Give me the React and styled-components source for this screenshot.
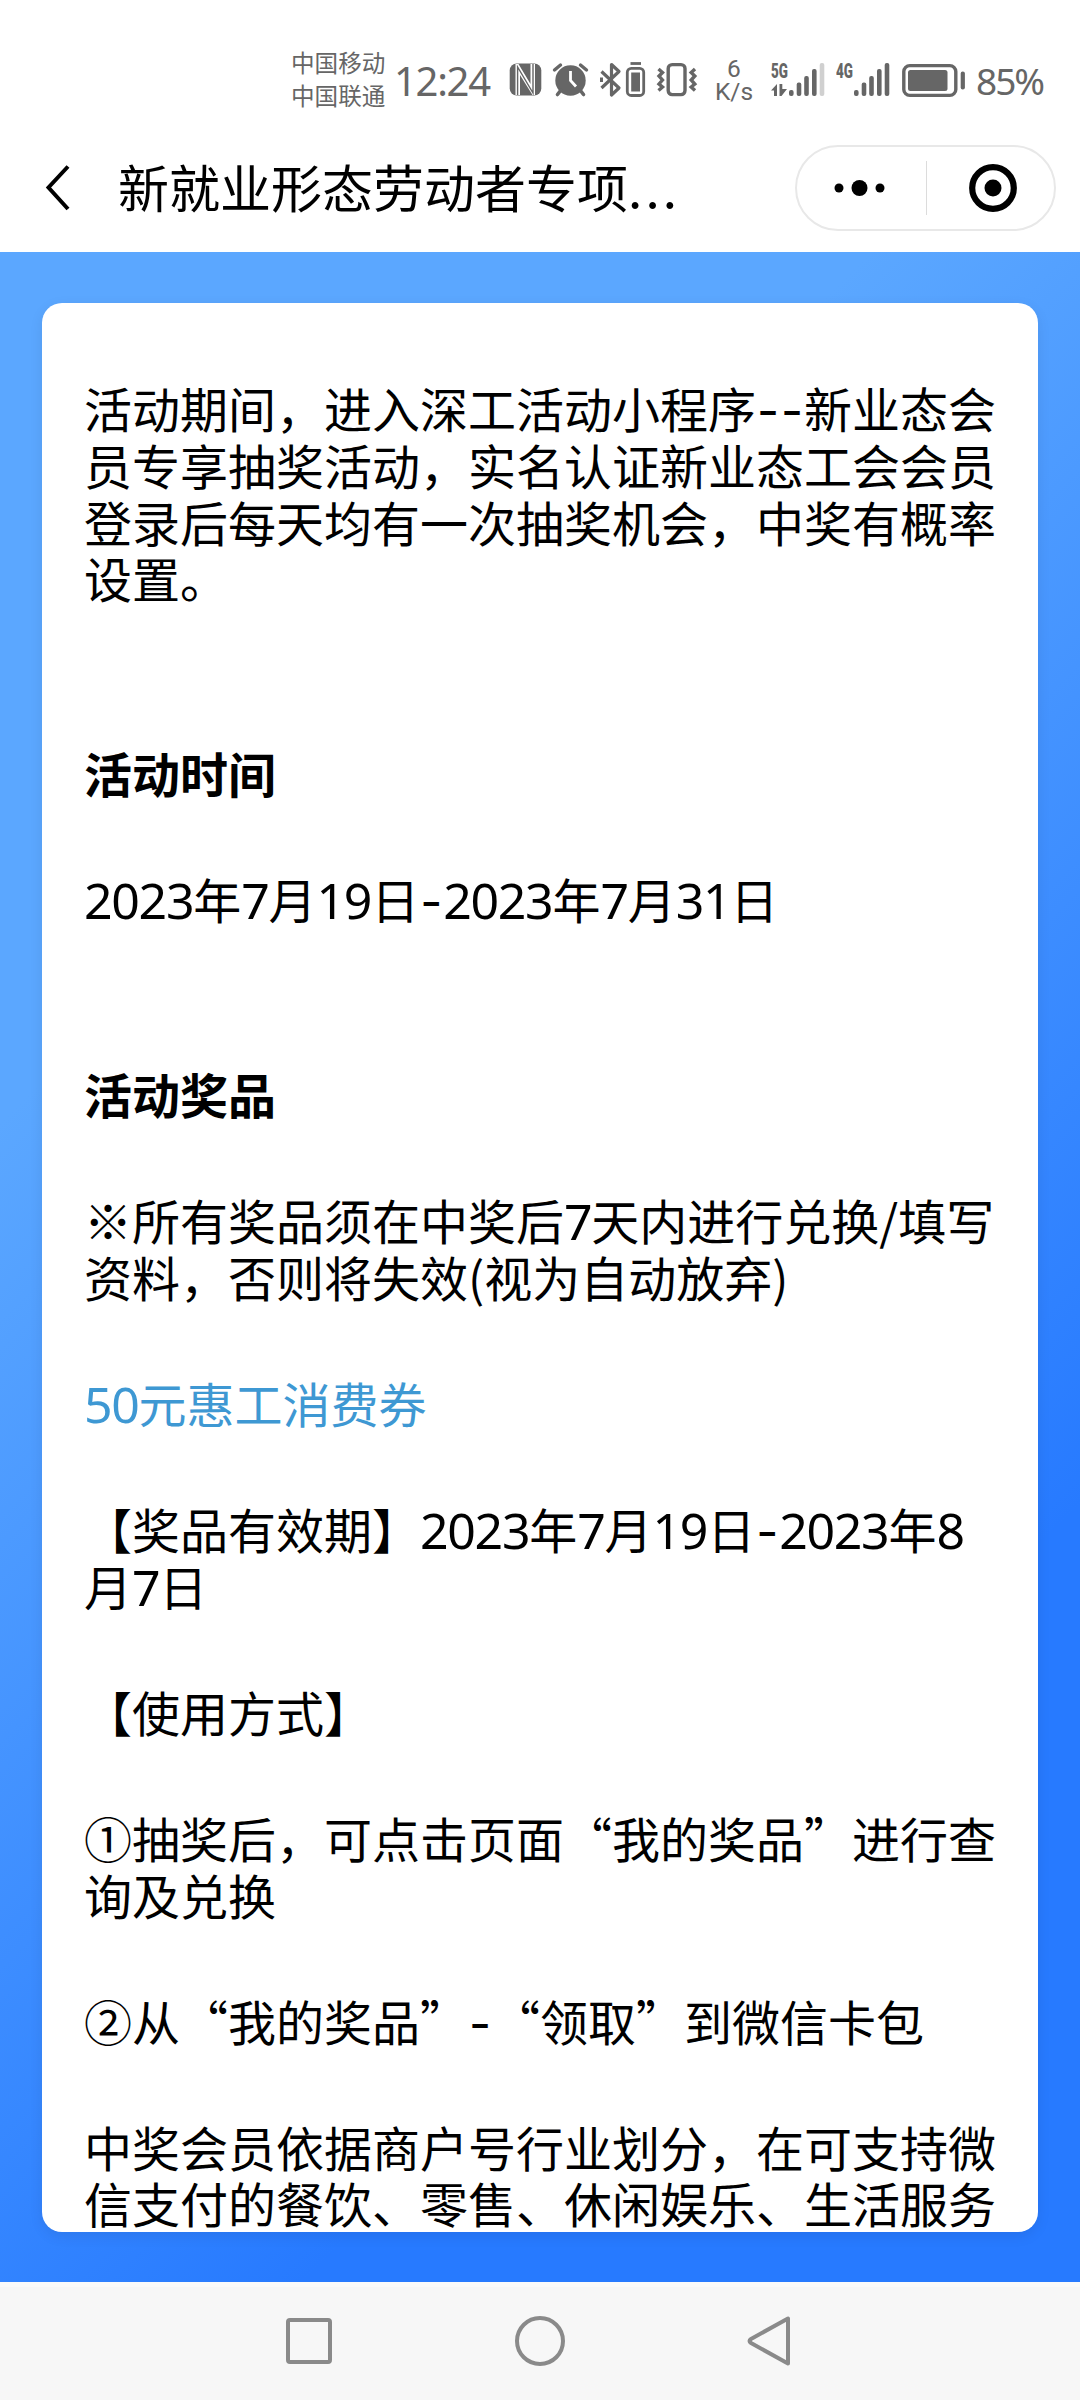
import React from "react";
import styled, { createGlobalStyle } from "styled-components";

const GlobalStyle = createGlobalStyle`
  * {
    box-sizing: border-box;
  }
  body {
    margin: 0;
    background: #fff;
    font-family: "Noto Sans CJK SC", sans-serif;
    text-spacing-trim: space-all;
  }
`

const Page = styled.div`
  display: flex;
  flex-direction: column;
  width: 1080px;
  height: 2400px;
  overflow: hidden;
`

const StatusBar = styled.div`
  display: flex;
  align-items: center;
  height: 124px;
  padding: 36px 0 0 291px;
  color: #666;
  font-family: Roboto, sans-serif;
`

const Carriers = styled.div`
  width: 103px;
  margin-bottom: 2px;
  font-family: "Noto Sans CJK SC", sans-serif;
  font-size: 23.6px;
  line-height: 33px;
  white-space: nowrap;
`

const Clock = styled.div`
  width: 115px;
  padding-top: 2px;
  font-family: "Noto Sans", sans-serif;
  font-size: 40px;
  line-height: 48px;
  letter-spacing: -1.3px;
`

const StatusIcons = styled.svg`
  display: block;
  width: 190px;
  height: 40px;
`

const Speed = styled.div`
  display: flex;
  flex-direction: column;
  align-items: center;
  width: 70px;
  font-size: 24.5px;
  line-height: 23px;
`

const Signal = styled.div`
  position: relative;
  width: ${(props) => props.$width}px;
  height: 40px;
`

const SignalLabel = styled.span`
  position: absolute;
  top: 2px;
  left: 0;
  font-size: 21px;
  font-weight: 900;
  line-height: 18px;
  transform: scaleX(0.64);
  transform-origin: left;
`

const SignalBars = styled.svg`
  display: block;
  width: 100%;
  height: 40px;
`

const BatteryIcon = styled.svg`
  display: block;
  width: 75px;
  height: 40px;
`

const BatteryText = styled.div`
  padding-top: 2px;
  font-family: "Noto Sans", sans-serif;
  font-size: 37px;
  line-height: 44px;
  letter-spacing: -2px;
`

const NavBar = styled.header`
  display: flex;
  align-items: center;
  height: 128px;
  padding: 0 24px 0 42px;
`

const BackIcon = styled.svg`
  width: 32px;
  height: 50px;
  margin-right: 44px;
`

const NavTitle = styled.h1`
  flex: 1;
  margin: 0 0 5px;
  color: #000;
  font-size: 51px;
  font-weight: 400;
  line-height: 72px;
  white-space: nowrap;
`

const Ellipsis = styled.span`
  letter-spacing: 3.2px;
`

const Capsule = styled.div`
  display: flex;
  align-items: center;
  width: 261px;
  height: 86px;
  border: 2px solid #e8e8e8;
  border-radius: 43px;
`

const CapsuleButton = styled.div`
  display: flex;
  align-items: center;
  justify-content: center;
  width: 50%;
  height: 54px;
  padding: 0 ${(props) => props.$right || 0}px 0 ${(props) => props.$left || 0}px;

  & + & {
    border-left: 1px solid #dcdcdc;
  }
`

const Content = styled.main`
  display: flex;
  height: 2030px;
  padding: 51px 42px 50px;
  background: linear-gradient(135deg, #5ba7ff 28%, #277aff 75%);
`

const Card = styled.article`
  flex: 1;
  display: flex;
  flex-direction: column;
  gap: 138.2px;
  padding: 76px 40px 0 42px;
  overflow: hidden;
  border-radius: 20px;
  background: #fff;
  box-shadow: 0 4px 14px rgba(0, 0, 0, 0.08);
`

const Section = styled.section`
  display: flex;
  flex-direction: column;
  gap: 69.2px;
`

const SectionTitle = styled.h2`
  margin: 0;
  font-size: 48px;
  font-weight: 700;
  line-height: 56.8px;
`

const Paragraph = styled.p`
  margin: 0;
  color: ${(props) => props.$color || "#000"};
  font-size: 48px;
  line-height: 56.8px;
`

const Digits = styled.span`
  font-family: "Noto Sans", sans-serif;
  font-size: 50px;
  line-height: 0;
  letter-spacing: -1.3px;
`

const Dash = styled.span`
  display: inline-block;
  width: 24px;
  font-family: Inter, sans-serif;
  line-height: 1;
  text-align: center;
`

const SystemNav = styled.nav`
  display: flex;
  align-items: center;
  justify-content: center;
  gap: 178px;
  height: 118px;
  background: #f7f7f7;
  box-shadow: inset 0 5px #fafafa;
`

const NavIcon = styled.svg`
  width: 52px;
  height: 52px;
  fill: none;
  stroke: #8a8a8a;
  stroke-width: 4;
`

const sections = [
  {
    paragraphs: [
      {
        text: "活动期间，进入深工活动小程序--新业态会员专享抽奖活动，实名认证新业态工会会员登录后每天均有一次抽奖机会，中奖有概率设置。",
      },
    ],
  },
  {
    title: "活动时间",
    paragraphs: [{ text: "2023年7月19日-2023年7月31日" }],
  },
  {
    title: "活动奖品",
    paragraphs: [
      { text: "※所有奖品须在中奖后7天内进行兑换/填写资料，否则将失效(视为自动放弃)" },
      { text: "50元惠工消费券", color: "#3e98d3" },
      { text: "【奖品有效期】2023年7月19日-2023年8月7日" },
      { text: "【使用方式】" },
      { text: "①抽奖后，可点击页面“我的奖品”进行查询及兑换" },
      { text: "②从“我的奖品”-“领取”到微信卡包" },
      { text: "中奖会员依据商户号行业划分，在可支持微信支付的餐饮、零售、休闲娱乐、生活服务" },
    ],
  },
];

// digits and hyphens use a latin face, everything else stays in the CJK one
const renderText = (text) =>
  text.split(/(\d+|-)/).map((part, index) => {
    if (part === "-") return <Dash key={index}>-</Dash>;
    if (/^\d+$/.test(part)) return <Digits key={index}>{part}</Digits>;
    return part;
  });

const bars = [
  { x: 0, y: 30 },
  { x: 7.7, y: 22.5 },
  { x: 15.2, y: 16 },
  { x: 23, y: 9 },
  { x: 30.7, y: 3 },
];

const SignalMeter = ({ label, width, left, level, arrows }) => (
  <Signal $width={width}>
    <SignalLabel>{label}</SignalLabel>
    <SignalBars viewBox={`0 0 ${width} 40`}>
      {arrows && (
        <path d="M0 30.5 L6 24 V36 H3 V30.5 Z M8.5 24 H11.3 V29 H16 L10.5 36 H8.5 Z" fill="#666" />
      )}
      {bars.map((bar, index) => (
        <rect
          key={bar.x}
          x={left + bar.x}
          y={bar.y}
          width="4.6"
          height={36 - bar.y}
          rx="2"
          fill={index < level ? "#666" : "#d0d0d0"}
        />
      ))}
    </SignalBars>
  </Signal>
);

const App = () => {
  return (
    <Page>
      <GlobalStyle />
      <StatusBar>
        <Carriers>
          <div>中国移动</div>
          <div>中国联通</div>
        </Carriers>
        <Clock>12:24</Clock>
        <StatusIcons viewBox="509 60 190 40" fill="none" stroke="#666">
          {/* nfc */}
          <rect x="509.7" y="63.5" width="31.6" height="32" rx="7" fill="#666" stroke="none" />
          <path
            d="M515.5 95 V64 H518.5 L530.5 84 V64 H535 V95 H532.5 L520 75 V95 Z"
            fill="#fff"
            stroke="none"
          />
          <path d="M517.6 95 V67 L533 93 V64" strokeWidth="1.4" />
          {/* alarm */}
          <circle cx="570.5" cy="80.5" r="15.2" fill="#666" stroke="none" />
          <path d="M554.5 70 L560.5 65 M586.5 70 L580.5 65" strokeWidth="3.4" strokeLinecap="round" />
          <path d="M561 90 L557.5 94.5 M580 90 L583.5 94.5" strokeWidth="3.6" strokeLinecap="round" />
          <path d="M570.5 71 V80.5 L576 86.5" stroke="#fff" strokeWidth="2.8" />
          {/* bluetooth with its battery */}
          <path d="M601.5 71.5 L619 88 L611.5 95 V64.5 L619 71.5 L601.5 88" strokeWidth="3.2" strokeLinejoin="round" />
          <path d="M601.5 77.5 V82" strokeWidth="3" />
          <rect x="627.3" y="68.3" width="16.4" height="27.2" rx="4" strokeWidth="2.8" />
          <rect x="631.2" y="72.5" width="8.8" height="19" fill="#666" stroke="none" />
          <path d="M630.5 63.5 H641" strokeWidth="2.8" />
          {/* vibrate */}
          <rect x="668.2" y="64.6" width="16.8" height="30" rx="4" strokeWidth="3.4" />
          <path d="M658.5 69 L662.5 72.5 L659 76 L662.5 80 L659 84 L662.5 87 L658.5 90.5" strokeWidth="3.4" />
          <path d="M695 69 L691.2 72.5 L694.8 76 L691.2 80 L694.8 84 L691.2 87 L695 90.5" strokeWidth="3.4" />
        </StatusIcons>
        <Speed>
          <span>6</span>
          <span>K/s</span>
        </Speed>
        <Signal $width={2} />
        <SignalMeter label="5G" width={65} left={18} level={4} arrows />
        <SignalMeter label="4G" width={65} left={18} level={5} />
        <BatteryIcon viewBox="901 60 75 40" fill="none" stroke="#666">
          <rect x="903.8" y="65.6" width="52" height="29.8" rx="6" strokeWidth="3.4" />
          <rect x="908" y="70" width="39.5" height="21" rx="2.5" fill="#666" stroke="none" />
          <rect x="960.7" y="71.5" width="4.2" height="18" rx="2" fill="#666" stroke="none" />
        </BatteryIcon>
        <BatteryText>85%</BatteryText>
      </StatusBar>
      <NavBar>
        <BackIcon viewBox="0 0 32 50" fill="none" stroke="#000" strokeWidth="4">
          <path d="M26 3.5 L6.5 24.5 L26 46" />
        </BackIcon>
        <NavTitle>
          新就业形态劳动者专项<Ellipsis>...</Ellipsis>
        </NavTitle>
        <Capsule>
          <CapsuleButton $right={2}>
            <svg width="52" height="18" viewBox="0 0 52 18">
              <circle cx="5" cy="9" r="4.5" />
              <circle cx="25.5" cy="9" r="8" />
              <circle cx="46" cy="9" r="4.5" />
            </svg>
          </CapsuleButton>
          <CapsuleButton $left={6}>
            <svg width="48" height="48" viewBox="0 0 48 48">
              <circle cx="24" cy="24" r="20.8" fill="none" stroke="#000" strokeWidth="6.2" />
              <circle cx="24" cy="24" r="8.5" />
            </svg>
          </CapsuleButton>
        </Capsule>
      </NavBar>
      <Content>
        <Card>
          {sections.map((section, index) => (
            <Section key={index}>
              {section.title && <SectionTitle>{section.title}</SectionTitle>}
              {section.paragraphs.map((paragraph) => (
                <Paragraph key={paragraph.text} $color={paragraph.color}>
                  {renderText(paragraph.text)}
                </Paragraph>
              ))}
            </Section>
          ))}
        </Card>
      </Content>
      <SystemNav>
        <NavIcon viewBox="0 0 52 52">
          <rect x="4" y="5" width="42" height="42" rx="2" />
        </NavIcon>
        <NavIcon viewBox="0 0 52 52">
          <circle cx="26" cy="26" r="23" />
        </NavIcon>
        <NavIcon viewBox="0 0 52 52">
          <path d="M44 3.5 V48.5 L7 28 Q4 26 7 24 Z" strokeLinejoin="round" />
        </NavIcon>
      </SystemNav>
    </Page>
  );
};

export default App;
